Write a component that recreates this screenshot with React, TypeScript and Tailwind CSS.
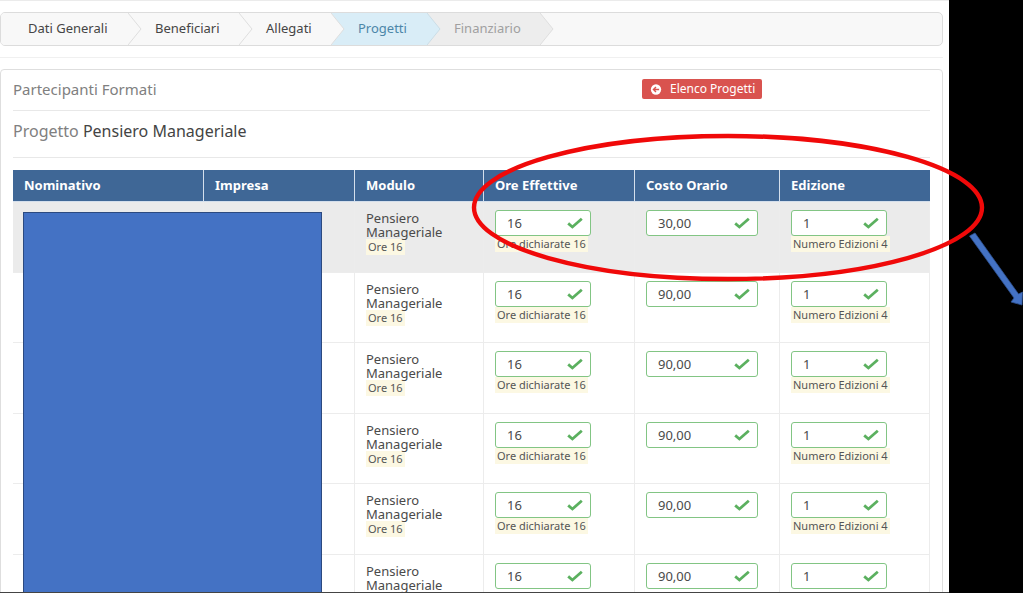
type Step = { label: string; width: string; fill: string; next: string; text: string; edge: string };

const steps: Step[] = [
  { label: "Dati Generali", width: "w-[141px] pl-[27px]", fill: "#f8f8f8", next: "#f8f8f8", text: "bg-[#f8f8f8] text-[#454545]", edge: "#dedede" },
  { label: "Beneficiari", width: "w-[111px] pl-[13px]", fill: "#f8f8f8", next: "#f8f8f8", text: "bg-[#f8f8f8] text-[#454545]", edge: "#dedede" },
  { label: "Allegati", width: "w-[92px] pl-[13px]", fill: "#f8f8f8", next: "#d9edf7", text: "bg-[#f8f8f8] text-[#454545]", edge: "#dedede" },
  { label: "Progetti", width: "w-[96px] pl-[13px]", fill: "#d9edf7", next: "#ededed", text: "bg-[#d9edf7] text-[#4c86a8]", edge: "#cbdde6" },
  { label: "Finanziario", width: "w-[113px] pl-[13px]", fill: "#ededed", next: "#f8f8f8", text: "bg-[#ededed] text-[#a0a0a0]", edge: "#dedede" },
];

const rows = [
  { cost: "30,00", hints: true },
  { cost: "90,00", hints: true },
  { cost: "90,00", hints: true },
  { cost: "90,00", hints: true },
  { cost: "90,00", hints: true },
  { cost: "90,00", hints: false },
];

const headings = ["Nominativo", "Impresa", "Modulo", "Ore Effettive", "Costo Orario", "Edizione"];

function Field({ label, value, width }: { label: string; value: string; width: string }) {
  return (
    <div className={`relative ${width}`}>
      <input
        aria-label={label}
        defaultValue={value}
        className="block h-[26px] w-full rounded-[3px] border border-[#82c584] bg-white pr-8 pl-[11px] text-[13px] text-[#4a4a4a] outline-none"
      />
      <svg viewBox="0 0 16 12" className="pointer-events-none absolute top-[7px] right-2 h-3 w-4" fill="none">
        <path d="M1.2 6.4 5.4 10 14.8 1.8" stroke="#5bb05f" strokeWidth="2.8" />
      </svg>
    </div>
  );
}

function Hint({ children }: { children: string }) {
  return <div className="w-fit bg-[#fcf8e3] px-[2px] text-[11px] leading-4 whitespace-nowrap text-[#555]">{children}</div>;
}

export default function App() {
  return (
    <div className="relative flex h-screen overflow-hidden bg-black font-['Noto_Sans','Open_Sans',sans-serif] text-[13px] text-[#4a4a4a]">
      <main className="relative min-w-0 flex-1 overflow-hidden border-t border-b border-t-[#ebebeb] border-b-[#444] bg-white pr-[6px]">
        <nav aria-label="Fasi" className="mt-[11px] h-[34px] overflow-hidden rounded-[5px] border border-[#dcdcdc] bg-[#f8f8f8]">
          <ol className="flex h-full">
            {steps.map((s) => (
              <li key={s.label} className={`flex shrink-0 items-center justify-between ${s.width} ${s.text}`}>
                <a href="#" aria-current={s.label === "Progetti" ? "step" : undefined} className="text-[13px] whitespace-nowrap">
                  {s.label}
                </a>
                <svg viewBox="0 0 14 32" preserveAspectRatio="none" className="h-full w-[14px] shrink-0">
                  <rect width="14" height="32" fill={s.next} />
                  <path d="M0 0 13 16 0 32Z" fill={s.fill} />
                  <path d="M0 0 13 16 0 32" fill="none" stroke={s.edge} />
                </svg>
              </li>
            ))}
          </ol>
        </nav>
        <hr className="mt-[11px] border-[#f0f0f0]" />
        <section className="mt-[11px] rounded-[4px] border border-[#dedede] px-3 pb-4">
          <div className="flex h-[41px] items-center border-b border-[#e8e8e8] pb-[2px]">
            <h1 className="flex-1 text-[15px] text-[#808080]">Partecipanti Formati</h1>
            <button className="mr-[168px] flex h-5 w-[120px] items-center gap-2 rounded-[2px] bg-[#d9534f] pl-2 text-[12px] whitespace-nowrap text-white">
              <svg viewBox="0 0 12 12" className="h-[11px] w-3 shrink-0">
                <circle cx="6" cy="6" r="5.6" fill="#fff" />
                <path d="M9.4 6H3.4M6 3.2 3.2 6 6 8.8" fill="none" stroke="#d9534f" strokeWidth="1.5" />
              </svg>
              Elenco Progetti
            </button>
          </div>
          <h2 className="mb-3 flex h-[47px] items-center border-b border-[#e8e8e8] pb-[6px] text-[16px] text-[#808080]">
            <span>
              Progetto <span className="text-[#444]">Pensiero Manageriale</span>
            </span>
          </h2>
          <div className="relative">
            <table className="w-full table-fixed border-separate border-spacing-0 text-left">
              <colgroup>
                <col className="w-[191px]" />
                <col className="w-[151px]" />
                <col className="w-[129px]" />
                <col className="w-[151px]" />
                <col className="w-[145px]" />
                <col className="w-[150px]" />
              </colgroup>
              <thead>
                <tr className="h-8 bg-[#3f6796] text-[13px] text-white">
                  {headings.map((h) => (
                    <th key={h} className="border-r border-b border-[#d4dfec] px-[11px] font-bold last:border-r-0">
                      {h}
                    </th>
                  ))}
                </tr>
              </thead>
              <tbody>
                {rows.map(({ cost, hints }, i) => (
                  <tr
                    key={i}
                    className="h-[71px] align-top first:bg-[#ebebeb] even:h-[70px] [&>td]:border-r [&>td]:border-b [&>td]:border-[#ececec] [&>td]:px-[11px] [&>td]:pt-2"
                  >
                    <td />
                    <td />
                    <td>
                      <div className="pt-px leading-[14px]">Pensiero Manageriale</div>
                      {hints && <Hint>Ore 16</Hint>}
                    </td>
                    <td>
                      <Field label="Ore effettive" value="16" width="w-24" />
                      {hints && <Hint>Ore dichiarate 16</Hint>}
                    </td>
                    <td>
                      <Field label="Costo orario" value={cost} width="w-28" />
                    </td>
                    <td>
                      <Field label="Edizione" value="1" width="w-24" />
                      {hints && <Hint>Numero Edizioni 4</Hint>}
                    </td>
                  </tr>
                ))}
              </tbody>
            </table>
            <div className="absolute top-[42px] bottom-0 left-[10px] w-[299px] border border-[#2c4a80] bg-[#4472c4]" />
          </div>
        </section>
      </main>
      <aside className="w-[74px] shrink-0" />
      <svg viewBox="0 0 1023 593" className="pointer-events-none absolute top-0 right-0 h-[593px] w-[1023px]" fill="none">
        <ellipse cx="728" cy="207.5" rx="254" ry="71.5" stroke="#f00909" strokeWidth="4.4" />
        <path d="M969.5 236 975 233 1018.500 294 1022.500 292 1022 305 1011 302 1014 298Z" fill="#4472c4" stroke="#2f528f" strokeWidth="0.8" />
      </svg>
    </div>
  );
}
